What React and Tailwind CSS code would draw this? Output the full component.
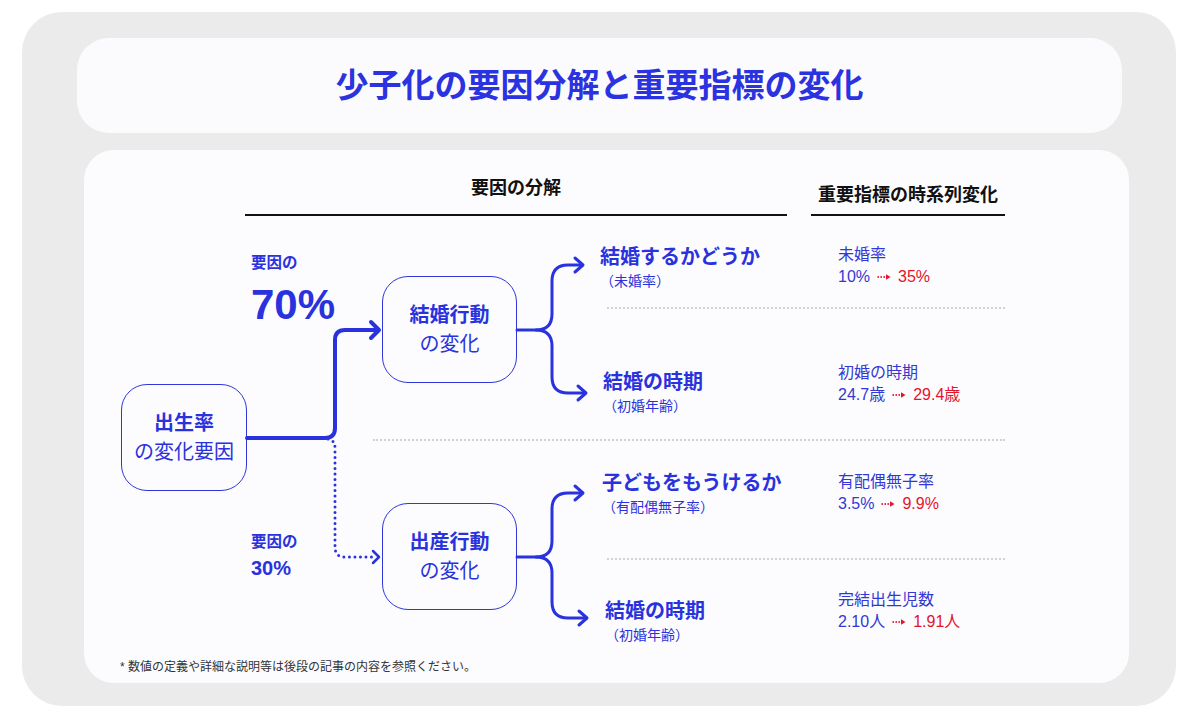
import React from "react";

const BLUE = "text-[#2a32dd]";

const Box = ({ title, sub, w }) => (
  <div
    className={`${w} h-[107px] rounded-[26px] border-[1.5px] border-[#3037d9] flex flex-col items-center justify-center text-[20px] leading-[29px] ${BLUE}`}
  >
    <span className="font-bold">{title}</span>
    <span className="font-normal">{sub}</span>
  </div>
);

const SmallArrow = () => (
  <svg width="14" height="8" viewBox="0 0 14 8" className="mx-[7px] inline-block">
    <circle cx="1.2" cy="4" r="0.9" fill="#e5132b" />
    <circle cx="4.2" cy="4" r="0.9" fill="#e5132b" />
    <circle cx="7.2" cy="4" r="0.9" fill="#e5132b" />
    <path d="M9 1.2 L13.5 4 L9 6.8 Z" fill="#e5132b" />
  </svg>
);

const Item = ({ title, sub, pt }) => (
  <div className={`w-[238px] ${pt} ${BLUE}`}>
    <div className="text-[20px] leading-[26px] font-bold">{title}</div>
    <div className="text-[14px] leading-[22px] font-normal">{sub}</div>
  </div>
);

const Indicator = ({ label, from, to, pt }) => (
  <div className={`${pt} text-[16px] leading-[22px]`}>
    <div className="text-[#3338d2]">{label}</div>
    <div className="flex items-center">
      <span className="text-[#3338d2]">{from}</span>
      <SmallArrow />
      <span className="text-[#e5132b]">{to}</span>
    </div>
  </div>
);

const Sep = () => <div className="ml-[7px] w-[398px] border-t-2 border-dotted border-[#d2d2d6]" />;

const Connectors = () => (
  <svg
    className="absolute inset-0 pointer-events-none"
    width="1045"
    height="430"
    viewBox="0 0 1045 430"
    fill="none"
    strokeLinecap="round"
    strokeLinejoin="round"
  >
    {/* main solid path to 結婚行動 */}
    <path d="M163 218 H241 Q251 218 251 208 V120 Q251 110 261 110 H294" stroke="#2a32dd" strokeWidth="4" />
    <path d="M287 102 L295 110 L287 118" stroke="#2a32dd" strokeWidth="4" />
    {/* dotted path to 出産行動 */}
    <path
      d="M244 219 Q251 220 251 228 V327 Q251 337 261 337 H291"
      stroke="#2a32dd"
      strokeWidth="3"
      strokeDasharray="0 5.5"
    />
    <path d="M289 331 L295 337 L289 343" stroke="#2a32dd" strokeWidth="2.5" />
    {/* top brace */}
    <path d="M433 110 H452 Q468 110 468 94 V61 Q468 45 484 45 H498" stroke="#2a32dd" strokeWidth="3" />
    <path d="M491 38 L499 45 L491 52" stroke="#2a32dd" strokeWidth="3" />
    <path d="M452 110 Q468 110 468 126 V157 Q468 173 484 173 H501" stroke="#2a32dd" strokeWidth="3" />
    <path d="M494 166 L502 173 L494 180" stroke="#2a32dd" strokeWidth="3" />
    {/* bottom brace */}
    <path d="M433 337 H452 Q468 337 468 321 V289 Q468 273 484 273 H498" stroke="#2a32dd" strokeWidth="3" />
    <path d="M491 266 L499 273 L491 280" stroke="#2a32dd" strokeWidth="3" />
    <path d="M452 337 Q468 337 468 353 V382 Q468 398 484 398 H502" stroke="#2a32dd" strokeWidth="3" />
    <path d="M495 391 L503 398 L495 405" stroke="#2a32dd" strokeWidth="3" />
  </svg>
);

export default function App() {
  return (
    <div className="w-[1200px] h-[721px] bg-white pt-[12px] pl-[22px] font-['Liberation_Sans','Noto_Sans_CJK_JP',sans-serif]">
      <div className="w-[1154px] h-[694px] rounded-[40px] bg-[#ebebeb] pt-[26px]">
        {/* title card */}
        <div className="ml-[55px] w-[1045px] h-[95px] rounded-[32px] bg-[#fbfbfd] flex items-center justify-center">
          <h1 className="text-[33px] font-bold text-[#2b33e0] leading-none">少子化の要因分解と重要指標の変化</h1>
        </div>

        {/* main card */}
        <div className="ml-[62px] mt-[17px] w-[1045px] h-[533px] rounded-[30px] bg-[#fcfcfe] pt-[26px]">
          {/* headers */}
          <div className="flex items-end pl-[161px] gap-[24px] text-[18px] leading-[24px] font-bold text-[#111]">
            <div className="w-[542px] flex flex-col items-center">
              <span className="mb-[14px]">要因の分解</span>
              <div className="w-full h-[2px] bg-[#111]" />
            </div>
            <div className="w-[194px] flex flex-col items-center">
              <span className="mb-[7px]">重要指標の時系列変化</span>
              <div className="w-full h-[2px] bg-[#111]" />
            </div>
          </div>

          {/* diagram */}
          <div className="relative mt-[4px] h-[430px] flex pl-[37px]">
            <Connectors />
            <div className="w-[126px] pt-[164px]">
              <Box title="出生率" sub="の変化要因" w="w-[126px]" />
            </div>

            <div className={`w-[126px] pl-[4px] font-bold ${BLUE}`}>
              <div className="mt-[33px] text-[15.5px] leading-[20px]">要因の</div>
              <div className="mt-[11px] text-[42px] leading-[42px]">70%</div>
              <div className="mt-[206px] text-[15.5px] leading-[20px]">要因の</div>
              <div className="mt-[4px] text-[20px] leading-[24px]">30%</div>
            </div>

            <div className="w-[632px] flex flex-col">
              {/* 結婚行動 group */}
              <div className="h-[219px] flex">
                <div className="w-[144px] pl-[9px] pt-[56px]">
                  <Box title="結婚行動" sub="の変化" w="w-[135px]" />
                </div>
                <div className="w-[83px]" />
                <div className="w-[405px] flex flex-col">
                  <div className="flex pt-[24px]">
                    <Item title="結婚するかどうか" sub="（未婚率）" pt="" />
                    <Indicator label="未婚率" from="10%" to="35%" pt="" />
                  </div>
                  <div className="mt-[15px]">
                    <Sep />
                  </div>
                  <div className="flex mt-[53px]">
                    <Item title="結婚の時期" sub="（初婚年齢）" pt="pt-[7px] pl-[3px]" />
                    <Indicator label="初婚の時期" from="24.7歳" to="29.4歳" pt="" />
                  </div>
                </div>
              </div>

              <div className="w-[632px] border-t-2 border-dotted border-[#d2d2d6]" />

              {/* 出産行動 group */}
              <div className="flex flex-1">
                <div className="w-[144px] pl-[9px] pt-[62px]">
                  <Box title="出産行動" sub="の変化" w="w-[135px]" />
                </div>
                <div className="w-[83px]" />
                <div className="w-[405px] flex flex-col">
                  <div className="flex pt-[29px]">
                    <Item title="子どもをもうけるか" sub="（有配偶無子率）" pt="pl-[2px]" />
                    <Indicator label="有配偶無子率" from="3.5%" to="9.9%" pt="pt-[1px]" />
                  </div>
                  <div className="mt-[40px]">
                    <Sep />
                  </div>
                  <div className="flex mt-[29px]">
                    <Item title="結婚の時期" sub="（初婚年齢）" pt="pt-[9px] pl-[5px]" />
                    <Indicator label="完結出生児数" from="2.10人" to="1.91人" pt="" />
                  </div>
                </div>
              </div>
            </div>
          </div>

          {/* footnote */}
          <p className="mt-[9px] pl-[36px] text-[12px] leading-[16px] text-[#333]">
            * 数値の定義や詳細な説明等は後段の記事の内容を参照ください。
          </p>
        </div>
      </div>
    </div>
  );
}
